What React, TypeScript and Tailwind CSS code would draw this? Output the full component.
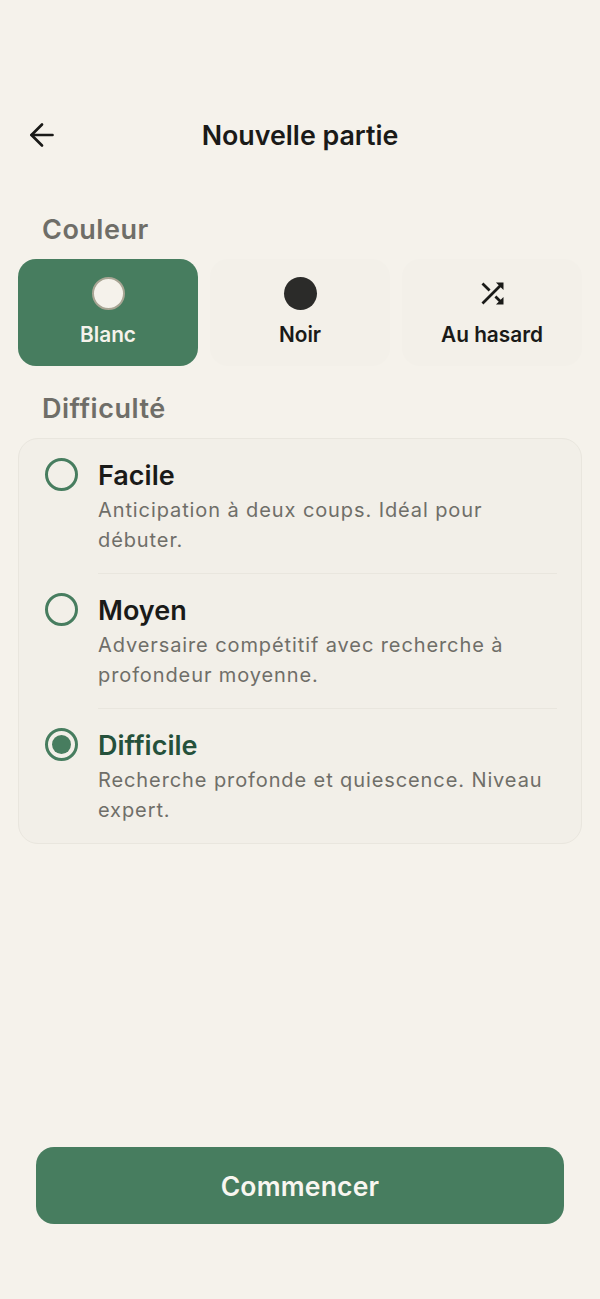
import { ArrowLeft } from 'lucide-react'
import { MdShuffle } from 'react-icons/md'
import type { ReactNode } from 'react'

const LEVELS = [
  {
    id: 'easy',
    title: 'Facile',
    description: 'Anticipation à deux coups. Idéal pour débuter.',
  },
  {
    id: 'medium',
    title: 'Moyen',
    description: 'Adversaire compétitif avec recherche à profondeur moyenne.',
  },
  {
    id: 'hard',
    title: 'Difficile',
    description: 'Recherche profonde et quiescence. Niveau expert.',
    selected: true,
  },
]

function ColorCard({
  label,
  selected,
  children,
}: {
  label: string
  selected?: boolean
  children: ReactNode
}) {
  return (
    <button
      type="button"
      className={
        selected
          ? 'flex h-[107px] w-[180px] flex-col items-center rounded-[18px] bg-[#477d5f] pt-[17px] text-[#f5f2eb]'
          : 'flex h-[107px] w-[180px] flex-col items-center rounded-[18px] bg-[#f3f0e9] pt-[17px] text-[#1a1a18]'
      }
    >
      <div className="flex h-[34px] items-center justify-center">{children}</div>
      <span className="mt-[13px] text-[20.8px] leading-[24px] font-semibold">{label}</span>
    </button>
  )
}

function LevelRow({
  title,
  description,
  selected,
  divider,
}: {
  title: string
  description: string
  selected?: boolean
  divider?: boolean
}) {
  return (
    <div className="flex">
      <div className="mt-[19px] ml-[26px] flex size-[33px] shrink-0 items-center justify-center rounded-full border-[3px] border-[#477d5f]">
        {selected && <div className="size-[19px] rounded-full bg-[#477d5f]" />}
      </div>
      <div
        className={
          divider
            ? 'mr-[24px] ml-[20px] flex-1 border-b border-[#e9e6de] pt-[20px] pb-[18px]'
            : 'mr-[24px] ml-[20px] flex-1 pt-[20px] pb-[18px]'
        }
      >
        <div
          className={
            selected
              ? 'text-[27px] leading-[34px] font-semibold text-[#25513b]'
              : 'text-[27px] leading-[34px] font-semibold text-[#1a1a18]'
          }
        >
          {title}
        </div>
        <p className="mt-[2px] text-[20px] leading-[30px] tracking-[0.9px] text-[#6f6e68]">
          {description}
        </p>
      </div>
    </div>
  )
}

export default function App() {
  return (
    <main className="flex h-[1299px] w-[600px] flex-col bg-[#f5f2eb] font-['Inter',sans-serif]">
      <header className="relative mt-[115px] flex h-[40px] items-center justify-center">
        <ArrowLeft className="absolute left-[24px] size-[36px] text-[#1a1a18]" strokeWidth={1.8} />
        <h1 className="text-[26.8px] leading-[40px] font-semibold text-[#1a1a18]">Nouvelle partie</h1>
      </header>
      <h2 className="mt-[56px] ml-[42px] text-[27px] leading-[38px] font-semibold tracking-[0.5px] text-[#6f6e68]">
        Couleur
      </h2>
      <div className="mt-[10px] flex gap-[12px] px-[18px]">
        <ColorCard label="Blanc" selected>
          <div className="size-[33px] rounded-full border-2 border-[#a8a594] bg-[#f5f2eb]" />
        </ColorCard>
        <ColorCard label="Noir">
          <div className="size-[33px] rounded-full bg-[#2b2b29]" />
        </ColorCard>
        <ColorCard label="Au hasard">
          <MdShuffle className="size-[33px]" />
        </ColorCard>
      </div>
      <h2 className="mt-[24px] ml-[42px] text-[27px] leading-[38px] font-semibold tracking-[0.5px] text-[#6f6e68]">
        Difficulté
      </h2>
      <section className="mt-[10px] ml-[18px] w-[564px] rounded-[20px] border border-[#e9e6de] bg-[#f2efe8]">
        {LEVELS.map((level, index) => (
          <LevelRow
            key={level.id}
            title={level.title}
            description={level.description}
            selected={level.selected}
            divider={index < LEVELS.length - 1}
          />
        ))}
      </section>
      <div className="mt-auto mb-[75px] px-[36px]">
        <button
          type="button"
          className="h-[77px] w-full rounded-[18px] bg-[#477d5f] pt-[3px] text-[26.5px] font-semibold tracking-[0.2px] text-[#f8f6f0]"
        >
          Commencer
        </button>
      </div>
    </main>
  )
}
